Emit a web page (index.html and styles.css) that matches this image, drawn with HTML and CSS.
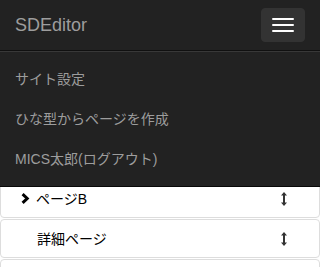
FILE: index.html
```html
<!DOCTYPE html>
<html lang="ja">
<head>
<meta charset="utf-8">
<title>SDEditor</title>
<link rel="stylesheet" href="styles.css">
</head>
<body>
<nav class="navbar">
  <div class="navbar-header">
    <a class="brand" href="#">SDEditor</a>
    <button class="toggle" type="button" aria-label="menu">
      <span class="bar"></span><span class="bar"></span><span class="bar"></span>
    </button>
  </div>
  <div class="collapse">
    <ul class="nav">
      <li><a href="#">サイト設定</a></li>
      <li><a href="#">ひな型からページを作成</a></li>
      <li><a href="#">MICS太郎(ログアウト)</a></li>
    </ul>
  </div>
</nav>
<main class="pages">
  <div class="page-item">
    <span class="chev"><svg width="9" height="11" viewBox="0 0 9 11"><polyline points="1.6,1.2 6.2,5.5 1.6,9.8" fill="none" stroke="#000" stroke-width="3"/></svg></span>
    <span class="label">ページB</span>
    <span class="move"><svg width="6" height="14" viewBox="0 0 6 14"><path d="M3 0 L6 3.5 L4 3.5 L4 10.5 L6 10.5 L3 14 L0 10.5 L2 10.5 L2 3.5 L0 3.5 Z" fill="#333"/></svg></span>
  </div>
  <div class="page-item child">
    <span class="label">詳細ページ</span>
    <span class="move"><svg width="6" height="14" viewBox="0 0 6 14"><path d="M3 0 L6 3.5 L4 3.5 L4 10.5 L6 10.5 L3 14 L0 10.5 L2 10.5 L2 3.5 L0 3.5 Z" fill="#333"/></svg></span>
  </div>
  <div class="page-item"></div>
</main>
</body>
</html>
```
FILE: styles.css
```css
* { box-sizing: border-box; }
html, body { margin: 0; padding: 0; }
body {
  font-family: "Liberation Sans", Arial, "Noto Sans CJK JP", sans-serif;
  font-size: 14px;
  line-height: 20px;
  color: #333;
  background: #fff;
  padding-top: 179px;
  overflow: hidden;
}
.navbar {
  position: fixed;
  top: 0;
  left: 0;
  right: 0;
  z-index: 10;
  background: #222;
  border-bottom: 1px solid #080808;
}
.navbar-header {
  height: 50px;
  display: flex;
  justify-content: space-between;
  align-items: flex-start;
}
.brand {
  padding: 15px;
  font-size: 18px;
  line-height: 20px;
  color: #9d9d9d;
  text-decoration: none;
}
.toggle {
  margin: 8px 15px 8px 0;
  padding: 9px 10px;
  width: 44px;
  height: 34px;
  background: #333;
  border: 1px solid #333;
  border-radius: 4px;
  display: flex;
  flex-direction: column;
  gap: 4px;
}
.bar {
  display: block;
  width: 22px;
  height: 2px;
  background: #fff;
  border-radius: 1px;
}
.collapse {
  border-top: 1px solid #101010;
  box-shadow: inset 0 1px 0 rgba(255,255,255,.1);
}
.nav {
  list-style: none;
  margin: 0;
  padding: 7.5px 0;
}
.nav a {
  display: block;
  padding: 10px 15px;
  line-height: 20px;
  color: #9d9d9d;
  text-decoration: none;
}
.pages {
  display: flex;
  flex-direction: column;
  gap: 1px;
}
.page-item {
  height: 39px;
  flex: none;
  border: 1px solid #ddd;
  border-radius: 4px;
  display: flex;
  align-items: center;
  padding-left: 20px;
  padding-right: 32px;
  color: #000;
}
.page-item.child { padding-left: 36px; }
.chev {
  width: 15px;
  display: flex;
  align-items: center;
}
.label { flex: 1; }
.move {
  display: flex;
  align-items: center;
}
```
